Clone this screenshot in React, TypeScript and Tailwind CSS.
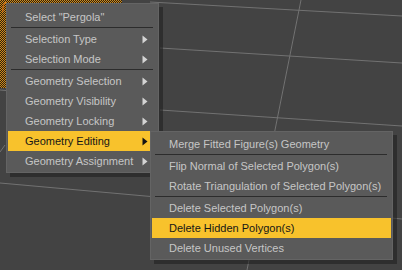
import React from "react";

type Item = { label: string; arrow?: boolean; active?: boolean } | "sep";

const mainItems: Item[] = [
  { label: 'Select "Pergola"' },
  "sep",
  { label: "Selection Type", arrow: true },
  { label: "Selection Mode", arrow: true },
  "sep",
  { label: "Geometry Selection", arrow: true },
  { label: "Geometry Visibility", arrow: true },
  { label: "Geometry Locking", arrow: true },
  { label: "Geometry Editing", arrow: true, active: true },
  { label: "Geometry Assignment", arrow: true },
];

const subItems: Item[] = [
  { label: "Merge Fitted Figure(s) Geometry" },
  "sep",
  { label: "Flip Normal of Selected Polygon(s)" },
  { label: "Rotate Triangulation of Selected Polygon(s)" },
  "sep",
  { label: "Delete Selected Polygon(s)" },
  { label: "Delete Hidden Polygon(s)", active: true },
  { label: "Delete Unused Vertices" },
];

function Arrow({ active }: { active?: boolean }) {
  return (
    <svg width="6" height="9" viewBox="0 0 6 9" className="shrink-0">
      <path d="M0.5 0.5 L5.5 4.5 L0.5 8.5 Z" fill={active ? "#141414" : "#d4d4d4"} />
    </svg>
  );
}

function Menu({ items, className }: { items: Item[]; className: string }) {
  return (
    <div
      className={
        "absolute bg-[#5a5a5a] border border-[#646464] shadow-[4px_4px_0_0_rgba(30,30,30,0.55)] px-[1px] pb-[1px] " +
        className
      }
    >
      {items.map((it, i) =>
        it === "sep" ? (
          <div key={i} className="h-[2px] mx-[3px] mr-[4px] border-t border-[#2c2c2c]" />
        ) : (
          <div
            key={i}
            className={
              "h-[20px] flex items-center justify-between pl-[17px] pr-[9px] whitespace-nowrap " +
              (it.active ? "bg-[#f8c22c] text-[#161616]" : "text-[#c6c6c6]")
            }
          >
            <span>{it.label}</span>
            {it.arrow ? <Arrow active={it.active} /> : null}
          </div>
        )
      )}
    </div>
  );
}

export default function App() {
  return (
    <div
      className="relative w-[402px] h-[270px] overflow-hidden bg-[#434343] text-[11px] leading-[20px]"
      style={{ fontFamily: '"Liberation Sans", Arial, sans-serif' }}
    >
      <svg className="absolute inset-0" width="402" height="270" viewBox="0 0 402 270">
        <defs>
          <pattern id="chk" width="2" height="2" patternUnits="userSpaceOnUse">
            <rect width="2" height="2" fill="#2a2010" />
            <rect width="1" height="1" fill="#d08a1a" />
            <rect x="1" y="1" width="1" height="1" fill="#d08a1a" />
          </pattern>
        </defs>
        <rect x="0" y="0" width="122" height="4" fill="url(#chk)" />
        <rect x="0" y="0" width="6" height="88" fill="url(#chk)" />
        <path d="M6 2 Q2 5 3 12" stroke="#e07010" strokeWidth="1" fill="none" />
        <g stroke="#727272" strokeWidth="1" fill="none">
          <line x1="150" y1="2" x2="402" y2="16" />
          <line x1="160" y1="48" x2="402" y2="63" />
          <line x1="0" y1="90" x2="6" y2="90.5" />
          <line x1="160" y1="110" x2="402" y2="126" />
          <line x1="0" y1="183" x2="402" y2="219" />
          <line x1="301" y1="0" x2="247" y2="270" />
          <line x1="0" y1="152" x2="5" y2="145" />
        </g>
      </svg>
      <Menu items={mainItems} className="left-[6px] top-[3px] w-[153px] pt-[3px]" />
      <Menu items={subItems} className="left-[150px] top-[131px] w-[243px] pt-[2px]" />
    </div>
  );
}
